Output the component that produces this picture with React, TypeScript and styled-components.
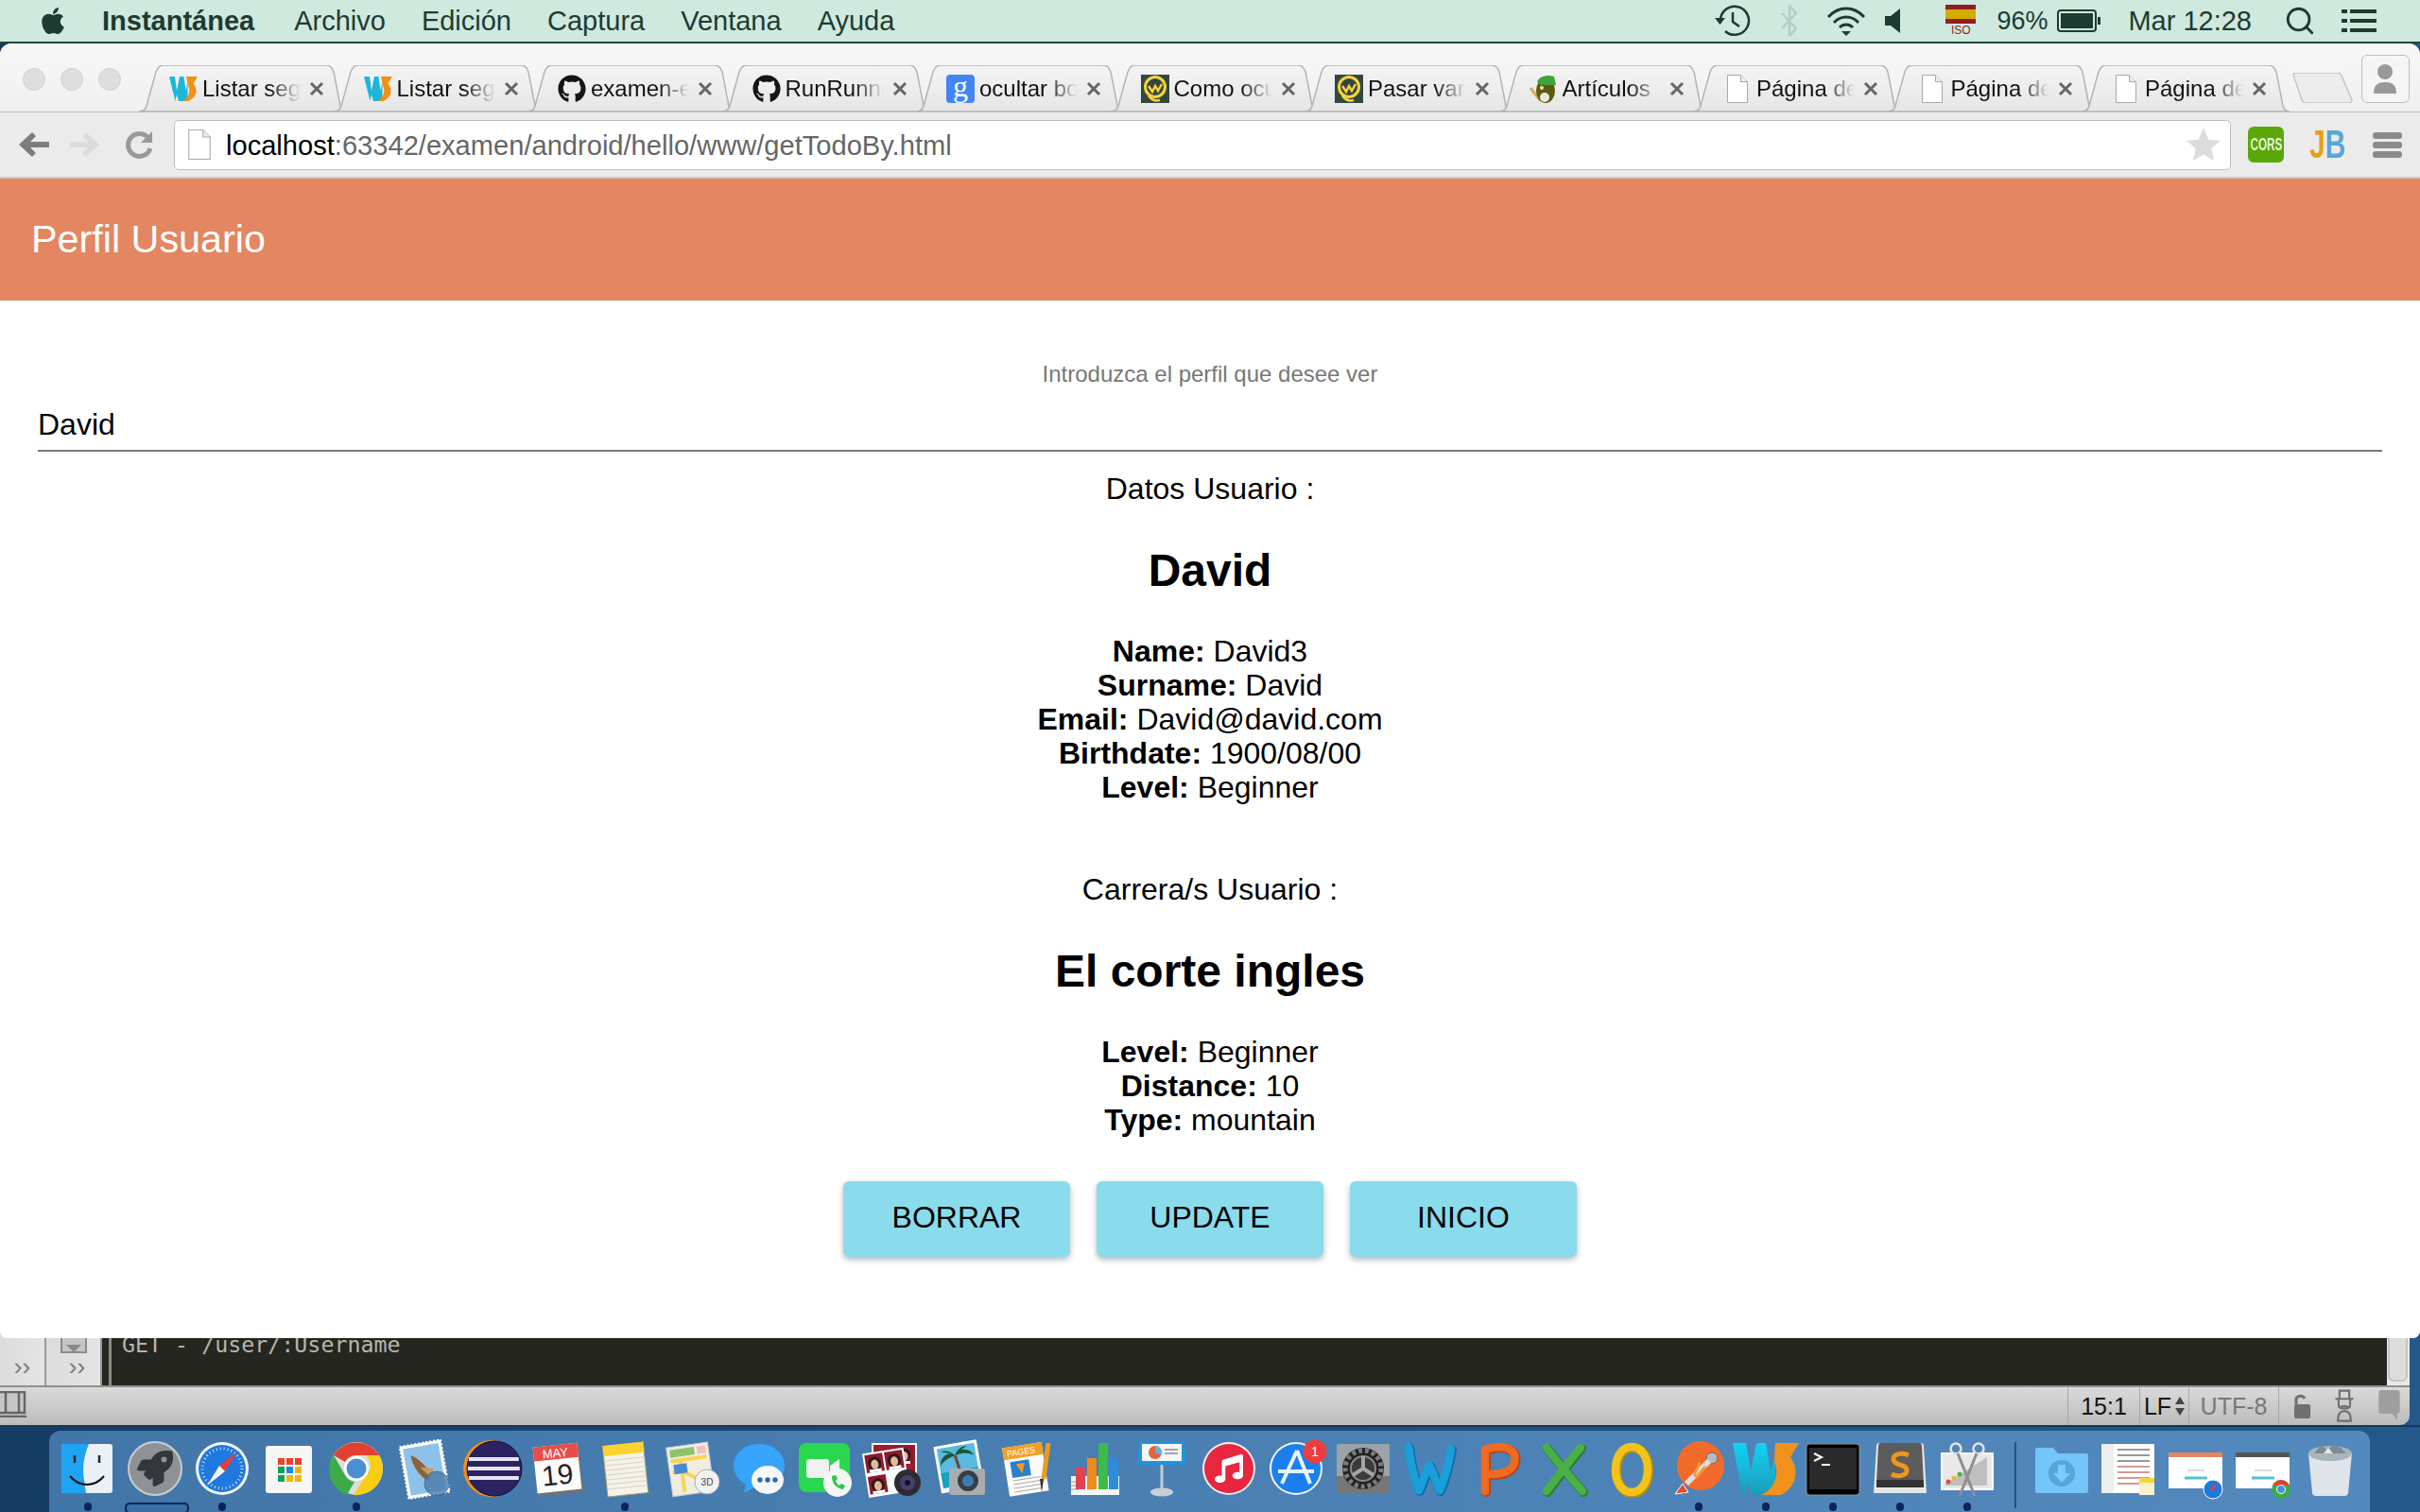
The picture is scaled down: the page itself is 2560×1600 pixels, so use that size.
import React from "react";
import styled, { createGlobalStyle } from "styled-components";
import { FaApple, FaGithub, FaMusic, FaRocket } from "react-icons/fa";
import { Search } from "lucide-react";

const GlobalStyle = createGlobalStyle`
  html, body { margin: 0; padding: 0; background: #1b4672; }
  * { box-sizing: border-box; }
  body { font-family: "Liberation Sans", Arial, sans-serif; }
`;

const Screen = styled.div`
  width: 2560px;
  height: 1600px;
  display: flex;
  flex-direction: column;
  overflow: hidden;
  background: linear-gradient(100deg, #14395f 0%, #1c4a78 50%, #24598c 100%);
`;

/* ---------- mac menu bar ---------- */
const MenuBar = styled.div`
  height: 46px;
  flex: none;
  display: flex;
  align-items: center;
  background: #cfe9df;
  border-bottom: 2px solid #1d4a3a;
  color: #1e3b30;
  font-size: 29px;
  padding-left: 41px;
`;

const AppleMark = styled(FaApple)`
  width: 30px;
  height: 32px;
  margin-right: 37px;
  color: #1e3b30;
`;

const MenuItem = styled.span<{ $bold?: boolean }>`
  font-weight: ${(p) => (p.$bold ? 700 : 400)};
  margin-right: ${(p) => (p.$bold ? 42 : 38)}px;
  white-space: nowrap;
`;

const StatusArea = styled.div`
  margin-left: auto;
  display: flex;
  align-items: center;
  height: 44px;
  padding-right: 46px;
`;

const StatusIcon = styled.svg<{ $gap?: number }>`
  display: block;
  flex: none;
  margin-left: ${(p) => p.$gap ?? 0}px;
`;

const SearchIcon = styled(Search)`
  flex: none;
  margin-left: 34px;
`;

const FlagBox = styled.div`
  width: 32px;
  margin-left: 48px;
  display: flex;
  flex-direction: column;
  align-items: center;
`;

const Flag = styled.div`
  width: 32px;
  height: 20px;
  background: linear-gradient(#8f1d21 0 25%, #d2ac00 25% 75%, #8f1d21 75%);
`;

const FlagLabel = styled.span`
  font-size: 12px;
  line-height: 14px;
  color: #8f1d21;
`;

const StatusText = styled.span<{ $gap: number; $size: number }>`
  margin-left: ${(p) => p.$gap}px;
  font-size: ${(p) => p.$size}px;
  white-space: nowrap;
`;

/* ---------- browser ---------- */
const BrowserWindow = styled.div`
  height: 1370px;
  flex: none;
  position: relative;
  z-index: 1;
  display: flex;
  flex-direction: column;
  border-radius: 12px 12px 8px 8px;
  overflow: hidden;
  background: #fff;
`;

const TabStrip = styled.div`
  height: 72px;
  flex: none;
  display: flex;
  align-items: flex-end;
  padding-left: 24px;
  background: linear-gradient(#f8f8f8, #f0f0f0);
`;

const Lights = styled.div`
  display: flex;
  gap: 16px;
  align-self: flex-start;
  margin-top: 26px;
  margin-right: 19px;
`;

const Light = styled.div`
  width: 24px;
  height: 24px;
  border-radius: 50%;
  background: #dedede;
  border: 1px solid #d2d2d2;
`;

const Tab = styled.div`
  position: relative;
  width: 220px;
  height: 49px;
  margin-right: -14.5px;
  padding: 0 0 0 32px;
  display: flex;
  align-items: center;
  font-size: 24px;
  color: #111;
`;

const TabShape = styled.svg`
  position: absolute;
  inset: 0;
  width: 100%;
  height: 100%;
`;

const Favicon = styled.div`
  position: relative;
  width: 30px;
  height: 30px;
  flex: none;
  display: flex;
  align-items: center;
  justify-content: center;
`;

const TabTitle = styled.span`
  position: relative;
  width: 104px;
  margin-left: 5px;
  white-space: nowrap;
  -webkit-mask-image: linear-gradient(90deg, #000 68%, transparent 100%);
  mask-image: linear-gradient(90deg, #000 68%, transparent 100%);
`;

const TabClose = styled.svg`
  position: relative;
  width: 16px;
  height: 16px;
  margin-left: 9px;
  flex: none;
`;

const NewTab = styled.svg`
  width: 64px;
  height: 32px;
  margin-left: 17px;
  margin-bottom: 9px;
  flex: none;
`;

const ProfileButton = styled.div`
  width: 51px;
  height: 51px;
  margin-left: 9px;
  align-self: flex-start;
  margin-top: 12px;
  border: 1px solid #bdbdbd;
  border-radius: 6px;
  background: #f5f5f5;
  display: flex;
  align-items: center;
  justify-content: center;
`;

const Toolbar = styled.div`
  height: 71px;
  flex: none;
  display: flex;
  align-items: center;
  padding-left: 19px;
  background: #ebebeb;
  border-top: 1px solid #bbb;
  border-bottom: 2px solid #c9c9c9;
`;

const NavIcon = styled.svg<{ $gap?: number }>`
  flex: none;
  margin-left: ${(p) => p.$gap ?? 0}px;
`;

const AddressBar = styled.div`
  width: 2176px;
  height: 53px;
  margin-left: 23px;
  flex: none;
  display: flex;
  align-items: center;
  padding: 0 10px 0 14px;
  background: #fff;
  border: 1px solid #bdbdbd;
  border-radius: 5px;
`;

const Url = styled.div`
  margin-left: 16px;
  padding-top: 2px;
  font-size: 29.1px;
  color: #666;
  white-space: nowrap;
  b {
    font-weight: 400;
    color: #000;
  }
`;

const Star = styled.svg`
  margin-left: auto;
  flex: none;
`;

const CorsBadge = styled.div`
  width: 38px;
  height: 38px;
  margin-left: 18px;
  flex: none;
  border-radius: 6px;
  background: #5ba80a;
  color: #e8f5d8;
  font-size: 19px;
  font-weight: 700;
  display: flex;
  align-items: center;
  justify-content: center;
  span {
    display: block;
    transform: scaleX(0.62);
  }
`;

const JbMark = styled.div`
  width: 37px;
  margin-left: 27px;
  font-size: 42px;
  font-weight: 700;
  line-height: 40px;
  flex: none;
  white-space: nowrap;
  transform: scaleX(0.72);
  transform-origin: left center;
  span:first-child { color: #e8a013; }
  span:last-child { color: #5aa7d3; }
`;

const BurgerMenu = styled.div`
  width: 31px;
  margin-left: 30px;
  flex: none;
  display: flex;
  flex-direction: column;
  gap: 3px;
  span {
    height: 7px;
    border-radius: 3px;
    background: #8a8a8a;
  }
`;

/* ---------- page ---------- */
const AppHeader = styled.header`
  height: 129px;
  flex: none;
  display: flex;
  align-items: center;
  padding-left: 33px;
  background: #e28762;
  color: #fff;
  font-size: 41.3px;
`;

const Page = styled.main`
  flex: 1;
  display: flex;
  flex-direction: column;
  align-items: center;
  padding: 60px 40px 0;
  background: #fff;
  color: #000;
  font-size: 32px;
  line-height: 36px;
  text-align: center;
`;

const Hint = styled.div`
  font-size: 24px;
  color: #777;
`;

const NameInput = styled.input`
  width: 100%;
  height: 56px;
  margin-top: 8px;
  padding: 0;
  border: none;
  border-bottom: 2px solid #777;
  outline: none;
  font: inherit;
  color: #000;
  background: transparent;
`;

const SectionLabel = styled.div<{ $top: number }>`
  margin-top: ${(p) => p.$top}px;
`;

const BigName = styled.h2`
  margin: 41px 0 0;
  font-size: 48px;
  line-height: 56px;
  font-weight: 700;
`;

const Fields = styled.div<{ $top: number }>`
  margin-top: ${(p) => p.$top}px;
`;

const Buttons = styled.div`
  display: flex;
  gap: 28px;
  margin-top: 47px;
`;

const ActionButton = styled.button`
  width: 240px;
  height: 80px;
  padding: 0 0 3px;
  border: none;
  border-radius: 6px;
  background: #8adcec;
  color: #000;
  font-family: inherit;
  font-size: 32px;
  box-shadow: 0 3px 6px rgba(0, 0, 0, 0.28);
`;

/* ---------- IDE behind the browser ---------- */
const IdeWindow = styled.div`
  width: 2549px;
  height: 102px;
  flex: none;
  margin-top: -10px;
  display: flex;
  flex-direction: column;
  border-radius: 0 0 10px 0;
  overflow: hidden;
`;

const IdeBody = styled.div`
  height: 60px;
  flex: none;
  display: flex;
  background: #25261f;
`;

const Gutter = styled.div<{ $w: number; $shift?: number }>`
  position: relative;
  width: ${(p) => p.$w}px;
  flex: none;
  display: flex;
  align-items: flex-end;
  justify-content: center;
  padding-bottom: 8px;
  padding-left: ${(p) => p.$shift ?? 0}px;
  background: linear-gradient(90deg, #dcdcdc, #e4e4e4);
  border-right: 2px solid #999;
  color: #777;
  font-size: 26px;
  line-height: 24px;
`;

const ToolWindowIcon = styled.svg`
  position: absolute;
  top: 6px;
  left: 15px;
`;

const CodeLine = styled.div`
  flex: 1;
  margin-left: 7px;
  padding-left: 11px;
  border-left: 3px solid #8a8a86;
  font-family: "DejaVu Sans Mono", "Liberation Mono", monospace;
  font-size: 23.3px;
  line-height: 34px;
  color: #b5b5b0;
  white-space: pre;
`;

const ScrollTrack = styled.div`
  width: 24px;
  flex: none;
  padding: 0 2px 4px 1px;
  background: #e8e8e8;
  display: flex;
  div {
    flex: 1;
    border: 2px solid #c4c4c4;
    border-radius: 0 0 6px 6px;
    background: #dcdcdc;
  }
`;

const StatusBar = styled.div`
  flex: 1;
  display: flex;
  align-items: stretch;
  background: linear-gradient(#dadada, #bcbcbc);
  border-top: 2px solid #8f8f8f;
  font-size: 25px;
  color: #111;
`;

const LayoutIcon = styled.svg`
  margin-top: 4px;
  flex: none;
`;

const StatusCell = styled.div<{ $w: number; $muted?: boolean }>`
  width: ${(p) => p.$w}px;
  flex: none;
  display: flex;
  align-items: center;
  justify-content: center;
  gap: 4px;
  border-left: 1px solid #a6a6a6;
  color: ${(p) => (p.$muted ? "#777" : "#111")};
`;

const StatusCellFirst = styled(StatusCell)`
  margin-left: auto;
`;

const IconsCell = styled.div`
  width: 139px;
  flex: none;
  display: flex;
  align-items: center;
  gap: 22px;
  padding-left: 14px;
  border-left: 1px solid #a6a6a6;
`;

/* ---------- dock ---------- */
const DockArea = styled.div`
  flex: 1;
  padding: 4px 53px 0 52px;
  border-top: 2px solid #15375a;
`;

const Dock = styled.div`
  height: 100%;
  display: flex;
  gap: 13px;
  padding: 12px 0 0 12px;
  border-radius: 12px 12px 0 0;
  background: linear-gradient(90deg, #4276a9, #5389bd);
`;

const DockItem = styled.div<{ $run?: boolean; $bar?: boolean }>`
  position: relative;
  width: 58px;
  height: 58px;
  flex: none;
  svg { display: block; overflow: visible; }
  &::after {
    content: "";
    display: ${(p) => (p.$run || p.$bar ? "block" : "none")};
    position: absolute;
    top: 64px;
    left: ${(p) => (p.$bar ? "-3px" : "25px")};
    width: ${(p) => (p.$bar ? "64px" : "8px")};
    height: ${(p) => (p.$bar ? "8px" : "9px")};
    border-radius: 5px;
    background: ${(p) => (p.$bar ? "#3c6fa5" : "#0a2558")};
    border: ${(p) => (p.$bar ? "2px solid #0a2558" : "none")};
  }
`;

const DockDivider = styled.div`
  width: 2px;
  height: 70px;
  margin: 0 6px 0 8px;
  flex: none;
  background: #25507d;
`;

/* ---------- favicons ---------- */
const WsMark = () => (
  <svg width="30" height="30" viewBox="0 0 60 60">
    <path d="M0 4h12l4 30 6-30h9l4 30 4-20v42H20l-4-14-3 14z" fill="#1cb6d8" />
    <path d="M36 4h24l-9 15c11 13 7 30-11 37H29c12-7 17-21 11-33z" fill="#f29111" />
  </svg>
);

const Swirl = () => (
  <svg width="30" height="30" viewBox="0 0 30 30">
    <rect width="30" height="30" fill="#33473f" />
    <circle cx="15" cy="13" r="10.500" fill="none" stroke="#f5d23e" strokeWidth="3" />
    <path d="M8 12l4 6 3-6 3 5 4-7M8 22c3 5 8 6 12 5" fill="none" stroke="#f5d23e" strokeWidth="2.500" />
  </svg>
);

const GoogleFav = styled.div`
  width: 30px;
  height: 30px;
  border-radius: 4px;
  background: #4285f4;
  color: #fff;
  font-family: "Liberation Serif", serif;
  font-size: 32px;
  line-height: 24px;
  text-align: center;
`;

const BirdFav = () => (
  <svg width="30" height="30" viewBox="0 0 30 30">
    <path d="M1 14l10 13" stroke="#d8b066" strokeWidth="3.500" />
    <ellipse cx="17" cy="17" rx="10" ry="13" fill="#5f5a12" />
    <path d="M8 8c2-7 12-8 18-6l2 9H12z" fill="#3fa33a" />
    <circle cx="13" cy="14" r="2" fill="#e8e8a0" />
    <circle cx="16" cy="24" r="5" fill="#e8e8e0" />
  </svg>
);

const PageIcon = ({ w = 22, h = 30 }: { w?: number; h?: number }) => (
  <svg width={w} height={h} viewBox="0 0 22 30">
    <path d="M.5.5h14l7 7v22H.5z" fill="#fff" stroke="#a8a8a8" />
    <path d="M14.500.5v7h7" fill="#eee" stroke="#a8a8a8" />
  </svg>
);

type TabInfo = { icon: React.ReactNode; title: string };

const tabs: TabInfo[] = [
  { icon: <WsMark />, title: "Listar seg" },
  { icon: <WsMark />, title: "Listar seg" },
  { icon: <FaGithub size={30} color="#151515" />, title: "examen-e" },
  { icon: <FaGithub size={30} color="#151515" />, title: "RunRunne" },
  { icon: <GoogleFav>g</GoogleFav>, title: "ocultar bo" },
  { icon: <Swirl />, title: "Como ocu" },
  { icon: <Swirl />, title: "Pasar vari" },
  { icon: <BirdFav />, title: "Artículos" },
  { icon: <PageIcon />, title: "Página de" },
  { icon: <PageIcon />, title: "Página de" },
  { icon: <PageIcon />, title: "Página de" },
];

/* ---------- dock icons (58 x 58 box) ---------- */
const Ico = ({ children, defs }: { children: React.ReactNode; defs?: React.ReactNode }) => (
  <svg width="58" height="58" viewBox="0 0 58 58">
    {defs && <defs>{defs}</defs>}
    {children}
  </svg>
);

const Finder = () => (
  <Ico>
    <rect x="1" y="2" width="54" height="52" rx="3" fill="#e9f0f6" />
    <path d="M4 2h26c-6 14-7 28-5 38l2 14H4a3 3 0 0 1-3-3V5a3 3 0 0 1 3-3z" fill="#1ea4f2" />
    <path d="M15 14v8M41 14v8" stroke="#1d2a3a" strokeWidth="2.500" />
    <path d="M10 36c10 12 26 12 36 0" fill="none" stroke="#111" strokeWidth="2" />
  </Ico>
);

const Launchpad = () => (
  <Ico>
    <circle cx="29" cy="28" r="28" fill="#8d9296" stroke="#c9cdd0" strokeWidth="2" />
    <g transform="translate(10 9)"><FaRocket size={38} color="#33373b" /></g>
  </Ico>
);

const Safari = () => (
  <Ico>
    <circle cx="29" cy="28" r="28" fill="#f2f6fb" />
    <circle cx="29" cy="28" r="25" fill="#1e78de" />
    <circle cx="29" cy="28" r="21" fill="none" stroke="#cfe4fb" strokeWidth="3" strokeDasharray="1 3" />
    <path d="M45 10L26 25l6 6z" fill="#ef3b36" />
    <path d="M13 46l13-21 6 6z" fill="#f2f2f2" />
  </Ico>
);

const AppsGrid = () => {
  const colours = ["#e9432f", "#e9432f", "#e9432f", "#11a05a", "#1689e6", "#f7b500", "#11a05a", "#f7b500", "#f7b500"];
  return (
    <Ico>
      <rect x="4" y="4" width="49" height="50" rx="3" fill="#f7f7f7" />
      {colours.map((c, i) => (
        <rect key={i} x={17 + (i % 3) * 9} y={17 + Math.floor(i / 3) * 9} width="7" height="7" fill={c} />
      ))}
    </Ico>
  );
};

const Chrome = () => (
  <Ico>
    <circle cx="29" cy="28" r="28" fill="#ddd" />
    <path d="M5 14a28 28 0 0 1 48 0H29a14 14 0 0 0-12 7z" fill="#e2412f" />
    <path d="M5 14l12 21a14 14 0 0 0 10 7l-8 14A28 28 0 0 1 5 14z" fill="#3cab4a" />
    <path d="M53 14a28 28 0 0 1-27 42l14-22a14 14 0 0 0-1-20z" fill="#fbcf10" />
    <circle cx="29" cy="28" r="13" fill="#fff" />
    <circle cx="29" cy="28" r="10.500" fill="#4b8fd3" />
  </Ico>
);

const MailStamp = () => (
  <Ico>
    <g transform="rotate(-10 29 28)">
      <rect x="8" y="1" width="44" height="56" fill="#fff" stroke="#fff" strokeWidth="2" strokeDasharray="2 2" />
      <rect x="11" y="4" width="38" height="50" fill="#8fc2ea" />
      <path d="M18 12c6 2 14 14 18 22l-4 8c-8-6-14-18-14-30z" fill="#8a6438" />
      <path d="M26 26l14 4-6 8z" fill="#c69a5e" />
    </g>
    <circle cx="43" cy="44" r="13" fill="#4b7baa" opacity=".8" stroke="#36618d" />
  </Ico>
);

const Eclipse = () => (
  <Ico>
    <circle cx="30" cy="28" r="30" fill="#f28d1a" />
    <circle cx="33" cy="28" r="29" fill="#2b2262" stroke="#0f1030" />
    <path d="M6 18h54M5 28h56M6 38h54" stroke="#e6e6f2" strokeWidth="4" transform="scale(.98 1)" />
  </Ico>
);

const CalendarMini = () => (
  <Ico>
    <g transform="rotate(-6 29 28)">
      <rect x="6" y="6" width="48" height="50" fill="#6d7378" />
      <rect x="5" y="3" width="47" height="49" fill="#fbfbfb" />
      <rect x="5" y="3" width="47" height="15" fill="#ea4c4c" />
      <text x="28" y="16" textAnchor="middle" fontSize="13" fill="#fff" fontFamily="Liberation Sans">MAY</text>
      <text x="28" y="45" textAnchor="middle" fontSize="30" fill="#222" fontFamily="Liberation Sans">19</text>
    </g>
  </Ico>
);

const Notes = () => (
  <Ico>
    <g transform="rotate(-6 29 28)">
      <rect x="8" y="2" width="43" height="54" fill="#f5f3e6" stroke="#a89c6e" />
      <rect x="8" y="2" width="43" height="11" fill="#fbd431" />
      {[18, 23, 28, 33, 38, 43, 48].map((y) => (
        <path key={y} d={`M8 ${y}h43`} stroke="#d3d3c8" />
      ))}
    </g>
  </Ico>
);

const Maps = () => (
  <Ico>
    <g transform="rotate(-8 26 28)">
      <rect x="5" y="3" width="44" height="52" fill="#f1ece0" stroke="#cfcfcf" />
      <rect x="8" y="6" width="26" height="8" fill="#8ac56b" />
      <rect x="37" y="6" width="9" height="8" fill="#f2bcc0" />
      <path d="M8 18h38M18 18v34M8 30c14-2 20 8 38 18" stroke="#fad54e" strokeWidth="4" fill="none" />
      <rect x="10" y="22" width="14" height="10" fill="#4a88d0" />
    </g>
    <circle cx="45" cy="42" r="13" fill="#f1f3f3" stroke="#aab" />
    <text x="45" y="46" textAnchor="middle" fontSize="10" fill="#444" fontFamily="Liberation Sans">3D</text>
  </Ico>
);

const Messages = () => (
  <Ico>
    <path d="M29 2c15 0 27 10 27 23S44 48 29 48c-3 0-6 0-9 2-2 2-6 3-8 3 2-2 3-5 3-8C7 40 2 33 2 25 2 12 14 2 29 2z" fill="#36a4fb" />
    <ellipse cx="38" cy="40" rx="17" ry="15" fill="#f7f7f7" />
    {[30, 38, 46].map((x) => (
      <circle key={x} cx={x} cy="40" r="2.700" fill="#2d6aa6" />
    ))}
  </Ico>
);

const FaceTime = () => (
  <Ico>
    <rect x="0" y="1" width="54" height="52" rx="8" fill="#29d84e" />
    <rect x="8" y="18" width="24" height="20" rx="3" fill="#f2f2f2" />
    <path d="M33 25l10-7v20l-10-7z" fill="#f2f2f2" />
    <ellipse cx="41" cy="43" rx="15" ry="15" fill="#f4f6f4" />
    <path d="M35 36c0 8 5 13 12 14l2-4-4-2-2 2c-2-1-3-3-4-5l2-2-2-4z" fill="#2cc84a" />
  </Ico>
);

const Portrait = ({ x, y }: { x: number; y: number }) => (
  <g transform={`translate(${x} ${y})`}>
    <rect width="19" height="19" fill="#8d1a2b" />
    <circle cx="9.500" cy="10" r="7" fill="#2a1a18" />
    <ellipse cx="9.500" cy="11" rx="4" ry="5" fill="#e7b79c" />
    <rect x="3" y="16" width="13" height="3" fill="#fff" />
  </g>
);

const PhotoBooth = () => (
  <Ico>
    <rect x="6" y="1" width="48" height="44" fill="#fff" />
    <rect x="8" y="3" width="44" height="40" fill="#9f1b2f" />
    <Portrait x={31} y={4} />
    <g transform="rotate(-9 20 30)">
      <rect x="-1" y="9" width="44" height="47" fill="#fff" />
      <Portrait x={1} y={11} />
      <Portrait x={22} y={11} />
      <Portrait x={1} y={34} />
    </g>
    <circle cx="44" cy="43" r="14" fill="#2c2c30" />
    <circle cx="44" cy="43" r="8" fill="#4a3d70" />
    <circle cx="44" cy="43" r="3" fill="#15151a" />
  </Ico>
);

const IPhoto = () => (
  <Ico>
    <g transform="rotate(-10 26 24)">
      <rect x="4" y="1" width="46" height="50" fill="#fff" />
      <rect x="7" y="4" width="40" height="42" fill="#5bb9e4" />
      <rect x="7" y="30" width="40" height="16" fill="#18a0c0" />
      <path d="M28 34l-3-20" stroke="#6b4a2a" strokeWidth="3" />
      <path d="M25 14C18 8 10 12 8 22c6-6 12-7 17-8zM25 14c6-8 16-6 20 3-6-4-14-5-20-3zM25 14c-4-6-10-8-14-6 5 1 10 3 14 6zM25 14c2-5 8-9 14-8-5 2-10 5-14 8z" fill="#155a30" />
    </g>
    <rect x="17" y="28" width="38" height="28" rx="3" fill="#a9adb0" />
    <circle cx="37" cy="41" r="11" fill="#3a3f46" />
    <circle cx="37" cy="41" r="6" fill="#3e7bb6" />
  </Ico>
);

const PagesIcon = () => (
  <Ico>
    <g transform="rotate(-9 26 30)">
      <rect x="6" y="3" width="42" height="52" fill="#fafafa" />
      <rect x="6" y="3" width="42" height="13" fill="#f2a024" />
      <text x="10" y="13" fontSize="9" fill="#fff" fontFamily="Liberation Sans">PAGES</text>
      <rect x="12" y="19" width="20" height="17" fill="#2b7fce" />
      <path d="M18 22h9l-4 11z" fill="#f29a27" />
      {[39, 43, 47, 51].map((y) => (
        <path key={y} d={`M12 ${y}h30`} stroke="#aaa" />
      ))}
    </g>
    <path d="M51 1l-5 38" stroke="#ef9a1f" strokeWidth="5" />
    <path d="M46 39l-2 14-2-14z" fill="#333" />
  </Ico>
);

const NumbersIcon = () => (
  <Ico>
    <path d="M4 36h51v20H4z" fill="#f5f5f5" />
    <path d="M4 42h8M4 46h8M4 50h8" stroke="#999" />
    <rect x="9" y="27" width="10" height="23" fill="#e0434f" />
    <rect x="21" y="17" width="10" height="33" fill="#f08a1d" />
    <rect x="33" y="1" width="10" height="49" fill="#3dbb4a" />
    <rect x="44" y="16" width="10" height="34" fill="#2a8de0" />
  </Ico>
);

const KeynoteIcon = () => (
  <Ico>
    <path d="M5 0h48l2 24H3z" fill="#2293dd" />
    <rect x="8" y="2" width="42" height="18" fill="#f4f6fa" />
    <circle cx="22" cy="11" r="7" fill="#e8633a" />
    <path d="M22 11V4a7 7 0 0 1 6 10z" fill="#5bb2e8" />
    <path d="M32 8h14M32 12h14" stroke="#888" strokeWidth="1.500" />
    <rect x="27.500" y="24" width="3" height="28" fill="#c4cdd4" />
    <ellipse cx="29" cy="53" rx="12" ry="4.500" fill="#c7ced4" />
  </Ico>
);

const ITunes = () => (
  <Ico>
    <circle cx="29" cy="28" r="28" fill="#f0f0f0" />
    <circle cx="29" cy="28" r="26" fill="#e8263f" />
    <g transform="translate(14 13)"><FaMusic size={30} color="#fff" /></g>
  </Ico>
);

const BadgeDisc = styled.text`
  font-family: "Liberation Sans", sans-serif;
`;

const AppStore = () => (
  <Ico>
    <circle cx="29" cy="28" r="28" fill="#eef4fb" />
    <circle cx="29" cy="28" r="26" fill="#1b80ee" />
    <path d="M30 9L14 44M30 9l14 35M10 31h38" stroke="#eaf3fc" strokeWidth="4" fill="none" />
    <circle cx="49" cy="10" r="12.500" fill="#ef3c3c" />
    <BadgeDisc x="49" y="15" textAnchor="middle" fontSize="14" fill="#fff">1</BadgeDisc>
  </Ico>
);

const SysPrefs = () => (
  <Ico>
    <rect x="1" y="2" width="56" height="53" rx="2" fill="#9aa3a8" />
    <rect x="1" y="36" width="56" height="19" fill="#777" />
    <circle cx="29" cy="28" r="22" fill="#222" />
    <circle cx="29" cy="28" r="19" fill="none" stroke="#7c7c7c" strokeWidth="5" strokeDasharray="4 3" />
    <circle cx="29" cy="28" r="13" fill="#3a3a3a" stroke="#8a8a8a" strokeWidth="2" />
    <path d="M29 28V15M29 28l11 7M29 28l-11 7" stroke="#a6a6a6" strokeWidth="4" />
  </Ico>
);

const Ribbon = ({ d, colour, dark }: { d: string; colour: string; dark: string }) => (
  <Ico>
    <path d={d} fill="none" stroke={dark} strokeWidth="10" strokeLinecap="round" strokeLinejoin="round" transform="translate(1 1)" />
    <path d={d} fill="none" stroke={colour} strokeWidth="8.500" strokeLinecap="round" strokeLinejoin="round" />
  </Ico>
);

const Postman = () => (
  <Ico>
    <ellipse cx="31" cy="25" rx="25" ry="26" fill="#f26b2a" />
    <circle cx="43" cy="17" r="6" fill="#b9b9b9" stroke="#666" />
    <path d="M40 20L16 44" stroke="#ddd" strokeWidth="6" />
    <path d="M30 22l-6 14M36 26l-10 12" stroke="#f39a3a" strokeWidth="3" />
    <path d="M12 44l-8 11 14-2z" fill="#ea4a26" stroke="#fff" />
  </Ico>
);

const WsDock = () => (
  <Ico
    defs={
      <linearGradient id="wsBlue" x1="0" y1="0" x2="0" y2="1">
        <stop offset="0" stopColor="#12d3f5" />
        <stop offset="1" stopColor="#1c9cb8" />
      </linearGradient>
    }
  >
    <path d="M-6 1H8l5 30 6-30h10l5 30 5-14v39H14l-4-14-3 14H4z" fill="url(#wsBlue)" />
    <path d="M39 1h25l-9 15c10 14 6 32-10 40H24c14-6 20-22 14-36z" fill="#f2921d" />
  </Ico>
);

const Terminal = () => (
  <Ico>
    <rect x="1" y="2" width="56" height="54" rx="3" fill="#000" stroke="#8a95a0" />
    <rect x="4" y="6" width="50" height="44" fill="#2a2a2a" />
    <path d="M9 12l8 4-8 4M17 24h9" fill="none" stroke="#fff" strokeWidth="2" />
  </Ico>
);

const Sublime = () => (
  <Ico>
    <path d="M1 54l3-50a3 3 0 0 1 3-3h44a3 3 0 0 1 3 3l3 50z" fill="#e6e6e6" />
    <path d="M4 44L6 4a3 3 0 0 1 3-3h40a3 3 0 0 1 3 3l2 40z" fill="#5c5c5c" />
    <rect x="4" y="40" width="50" height="8" fill="#333" />
    <path d="M38 14c-6-3-16-2-16 4 0 7 14 5 14 12 0 6-10 7-16 4" fill="none" stroke="#f0961c" strokeWidth="5" />
  </Ico>
);

const GrabIcon = () => (
  <Ico>
    <rect x="2" y="12" width="54" height="38" fill="#e9e9e9" stroke="#fff" strokeWidth="2" />
    <path d="M6 44l44-28v30H6z" fill="#bfbfbf" />
    <circle cx="17" cy="7" r="5.500" fill="none" stroke="#e4e4e4" strokeWidth="2.500" />
    <circle cx="41" cy="7" r="5.500" fill="none" stroke="#e4e4e4" strokeWidth="2.500" />
    <path d="M19 12l18 45M39 12L21 57" stroke="#8f8f8f" strokeWidth="3" />
    <circle cx="9" cy="42" r="2.500" fill="#e04c3c" />
    <circle cx="15" cy="38" r="2.500" fill="#e8b82c" />
    <circle cx="21" cy="34" r="2.500" fill="#48b04a" />
  </Ico>
);

const Folder = () => (
  <Ico>
    <path d="M1 8a2 2 0 0 1 2-2h17l5 6h30a2 2 0 0 1 2 2v38a2 2 0 0 1-2 2H3a2 2 0 0 1-2-2z" fill="#73c6f7" />
    <circle cx="29" cy="33" r="14" fill="#54a6dc" />
    <path d="M25 24h8v9h5l-9 10-9-10h5z" fill="#7ccbf8" />
  </Ico>
);

const DocStack = () => (
  <Ico>
    <rect x="0" y="2" width="56" height="52" fill="#fff" />
    <rect x="0" y="2" width="13" height="52" fill="#eee" />
    {[8, 14, 20, 26, 32, 38, 44].map((y) => (
      <path key={y} d={`M17 ${y}h34`} stroke={y > 24 ? "#d49a90" : "#999"} strokeWidth="2" />
    ))}
    <rect x="40" y="40" width="16" height="16" fill="#f7f1cc" />
    <rect x="40" y="38" width="16" height="5" fill="#f5d33f" />
  </Ico>
);

const WindowThumb = ({ head, overlay }: { head: string; overlay: React.ReactNode }) => (
  <Ico>
    <rect x="0" y="11" width="57" height="38" fill="#fff" />
    <rect x="0" y="11" width="57" height="5" fill={head} />
    <path d="M20 30h18" stroke="#bbb" />
    <path d="M17 38h24" stroke="#52c2d8" strokeWidth="3" />
    {overlay}
  </Ico>
);

const Trash = () => (
  <Ico>
    <path d="M6 12h46l-4 42a4 4 0 0 1-4 3H14a4 4 0 0 1-4-3z" fill="#dfe5ea" />
    <ellipse cx="29" cy="12" rx="23" ry="8" fill="#aab4bc" />
    <path d="M12 12l8-10 6 8 6-8 8 4 6 6z" fill="#7a8a96" />
    <path d="M22 12l5-6 5 6z" fill="#e6e6e6" />
  </Ico>
);

const miniSafari = (
  <g>
    <circle cx="47" cy="50" r="10" fill="#1e78de" stroke="#fff" />
    <path d="M52 43l-8 6 3 3z" fill="#ef3b36" />
  </g>
);

const miniChrome = (
  <g>
    <circle cx="48" cy="50" r="10" fill="#3cab4a" />
    <path d="M39 46a10 10 0 0 1 18 0z" fill="#e2412f" />
    <circle cx="48" cy="50" r="4.500" fill="#4b8fd3" stroke="#fff" />
  </g>
);

const Tabs = () => (
  <>
    {tabs.map((t, i) => (
      <Tab key={i}>
        <TabShape viewBox="0 0 220 49" preserveAspectRatio="none">
          <defs>
            <linearGradient id={`tabFill${i}`} x1="0" y1="0" x2="0" y2="1">
              <stop offset="0" stopColor="#f4f4f4" />
              <stop offset="1" stopColor="#e6e6e6" />
            </linearGradient>
          </defs>
          <path
            d="M0 49c5 0 7-2 8-6L18 7c2-5 4-7 9-7h170c5 0 7 2 9 7l7 36c1 4 3 6 7 6z"
            fill={`url(#tabFill${i})`}
            stroke="#b4b4b4"
            strokeWidth="1.500"
          />
        </TabShape>
        <Favicon>{t.icon}</Favicon>
        <TabTitle>{t.title}</TabTitle>
        <TabClose viewBox="0 0 16 16">
          <path d="M2 2l12 12M14 2L2 14" stroke="#666" strokeWidth="3" />
        </TabClose>
      </Tab>
    ))}
  </>
);

export default function App() {
  return (
    <Screen>
      <GlobalStyle />
      <MenuBar>
        <AppleMark />
        <MenuItem $bold>Instantánea</MenuItem>
        <MenuItem>Archivo</MenuItem>
        <MenuItem>Edición</MenuItem>
        <MenuItem>Captura</MenuItem>
        <MenuItem>Ventana</MenuItem>
        <MenuItem>Ayuda</MenuItem>
        <StatusArea>
          <StatusIcon width="38" height="36" viewBox="0 0 38 36" fill="none" stroke="#1e3b30" strokeWidth="2.500">
            <path d="M6 18a15 15 0 1 1 5 11" />
            <path d="M19 9v10l7 5" />
            <path d="M0 15h11l-5.500 7z" fill="#1e3b30" stroke="none" />
          </StatusIcon>
          <StatusIcon $gap={32} width="18" height="34" viewBox="0 0 18 34" fill="none" stroke="#b3cfc5" strokeWidth="2.500">
            <path d="M1 9l15 16-7 8V1l7 8L1 25" />
          </StatusIcon>
          <StatusIcon $gap={30} width="42" height="32" viewBox="0 0 42 32" fill="none" stroke="#1e3b30" strokeWidth="3">
            <path d="M2 12c11-12 27-12 38 0M8 18c7-8 19-8 26 0M14 23c4-4 10-4 14 0" />
            <path d="M16 27h10l-5 5z" fill="#1e3b30" stroke="none" />
          </StatusIcon>
          <StatusIcon $gap={20} width="16" height="26" viewBox="0 0 16 26">
            <path d="M0 8h6l10-8v26L6 18H0z" fill="#1e3b30" />
          </StatusIcon>
          <FlagBox>
            <Flag />
            <FlagLabel>ISO</FlagLabel>
          </FlagBox>
          <StatusText $gap={22} $size={27}>96%</StatusText>
          <StatusIcon $gap={10} width="47" height="24" viewBox="0 0 47 24">
            <rect x="1" y="1" width="40" height="22" rx="3" fill="none" stroke="#1e3b30" strokeWidth="2" />
            <rect x="4" y="4" width="34" height="16" fill="#1e3b30" />
            <rect x="43" y="8" width="3" height="8" fill="#1e3b30" />
          </StatusIcon>
          <StatusText $gap={28} $size={29}>Mar 12:28</StatusText>
          <SearchIcon size={34} color="#1e3b30" strokeWidth={2} />
          <StatusIcon $gap={27} width="37" height="24" viewBox="0 0 37 24" fill="#1e3b30">
            <path d="M0 0h6v4H0zM9 0h28v4H9zM0 10h6v4H0zM9 10h28v4H9zM0 20h6v4H0zM9 20h28v4H9z" />
          </StatusIcon>
        </StatusArea>
      </MenuBar>

      <BrowserWindow>
        <TabStrip>
          <Lights>
            <Light />
            <Light />
            <Light />
          </Lights>
          <Tabs />
          <NewTab viewBox="0 0 64 32">
            <path d="M1 2c0-1 1-2 3-2h44c2 0 3 1 4 3l11 26c0 2-1 3-3 3H15c-3 0-4-1-5-3z" fill="#ececec" stroke="#c4c4c4" strokeWidth="1.500" />
          </NewTab>
          <ProfileButton>
            <svg width="26" height="36" viewBox="0 0 26 36" fill="#999">
              <circle cx="13" cy="10" r="8" />
              <path d="M1 33c0-9 4-12 12-12s12 3 12 12z" />
            </svg>
          </ProfileButton>
        </TabStrip>
        <Toolbar>
          <NavIcon width="34" height="30" viewBox="0 0 34 30">
            <path d="M15 2L1 15l14 13 4-4-6-6h20v-6H13l6-6z" fill="#7d7d7d" />
          </NavIcon>
          <NavIcon $gap={21} width="32" height="30" viewBox="0 0 32 30">
            <path d="M17 2l14 13-14 13-4-4 6-6H0v-6h19l-6-6z" fill="#dcdcdc" />
          </NavIcon>
          <NavIcon $gap={27} width="28" height="32" viewBox="0 0 28 32">
            <path d="M24 9a12 12 0 1 0 2 11" fill="none" stroke="#999" strokeWidth="5" />
            <path d="M28 2v12H16z" fill="#999" />
          </NavIcon>
          <AddressBar>
            <PageIcon w={24} h={32} />
            <Url>
              <b>localhost</b>:63342/examen/android/hello/www/getTodoBy.html
            </Url>
            <Star width="36" height="36" viewBox="0 0 24 24">
              <path d="M12 0l3.500 8.500 8.500.7-6.500 5.600 2 8.700L12 18.800 4.500 23.500l2-8.700L0 9.200l8.500-.7z" fill="#dcdcdc" />
            </Star>
          </AddressBar>
          <CorsBadge>
            <span>CORS</span>
          </CorsBadge>
          <JbMark>
            <span>J</span>
            <span>B</span>
          </JbMark>
          <BurgerMenu>
            <span />
            <span />
            <span />
          </BurgerMenu>
        </Toolbar>

        <AppHeader>Perfil Usuario</AppHeader>
        <Page>
          <Hint>Introduzca el perfil que desee ver</Hint>
          <NameInput readOnly value="David" />
          <SectionLabel $top={21}>Datos Usuario :</SectionLabel>
          <BigName>David</BigName>
          <Fields $top={39}>
            <div><b>Name:</b> David3</div>
            <div><b>Surname:</b> David</div>
            <div><b>Email:</b> David@david.com</div>
            <div><b>Birthdate:</b> 1900/08/00</div>
            <div><b>Level:</b> Beginner</div>
          </Fields>
          <SectionLabel $top={72}>Carrera/s Usuario :</SectionLabel>
          <BigName>El corte ingles</BigName>
          <Fields $top={39}>
            <div><b>Level:</b> Beginner</div>
            <div><b>Distance:</b> 10</div>
            <div><b>Type:</b> mountain</div>
          </Fields>
          <Buttons>
            <ActionButton>BORRAR</ActionButton>
            <ActionButton>UPDATE</ActionButton>
            <ActionButton>INICIO</ActionButton>
          </Buttons>
        </Page>
      </BrowserWindow>

      <IdeWindow>
        <IdeBody>
          <Gutter $w={49}>››</Gutter>
          <Gutter $w={59} $shift={8}>
            <ToolWindowIcon width="28" height="20" viewBox="0 0 28 20">
              <rect x="1" y="1" width="26" height="18" fill="#c6c6c6" stroke="#8a8a8a" strokeWidth="2" />
              <path d="M14 19l8-8H6z" fill="#8a8a8a" />
            </ToolWindowIcon>
            ››
          </Gutter>
          <CodeLine>GET - /user/:Username</CodeLine>
          <ScrollTrack>
            <div />
          </ScrollTrack>
        </IdeBody>
        <StatusBar>
          <LayoutIcon width="28" height="28" viewBox="0 0 28 28" fill="none" stroke="#666" strokeWidth="2.500">
            <rect x="-2" y="1" width="28" height="22" fill="#c6c6c6" />
            <path d="M6 1v22M20 1v22M-2 27h30" />
          </LayoutIcon>
          <StatusCellFirst $w={76}>15:1</StatusCellFirst>
          <StatusCell $w={52}>
            LF
            <svg width="10" height="24" viewBox="0 0 10 24" fill="#444">
              <path d="M5 2l5 8H0zM5 22l5-8H0z" />
            </svg>
          </StatusCell>
          <StatusCell $w={95} $muted>UTF-8</StatusCell>
          <IconsCell>
            <svg width="20" height="28" viewBox="0 0 20 28" fill="none">
              <path d="M4 12V6a5 5 0 0 1 9 0" stroke="#6f6f6f" strokeWidth="3" />
              <rect x="2" y="12" width="17" height="15" rx="2" fill="#6f6f6f" />
            </svg>
            <svg width="26" height="38" viewBox="0 0 26 44" fill="none" stroke="#6f6f6f" strokeWidth="2.500">
              <path d="M7 12V3h12v9M2 13h22M6 13v8c0 5 14 5 14 0v-8M5 40c0-9 4-12 8-12s8 3 8 12z" />
              <path d="M7 24c3-3 9-3 12 0" />
            </svg>
            <svg width="25" height="34" viewBox="0 0 25 38">
              <path d="M3 0h19a3 3 0 0 1 3 3v22a3 3 0 0 1-3 3v8l-6-8H3a3 3 0 0 1-3-3V3a3 3 0 0 1 3-3z" fill="#9e9e9e" />
            </svg>
          </IconsCell>
        </StatusBar>
      </IdeWindow>

      <DockArea>
        <Dock>
          <DockItem $run><Finder /></DockItem>
          <DockItem $bar><Launchpad /></DockItem>
          <DockItem $run><Safari /></DockItem>
          <DockItem><AppsGrid /></DockItem>
          <DockItem $run><Chrome /></DockItem>
          <DockItem><MailStamp /></DockItem>
          <DockItem><Eclipse /></DockItem>
          <DockItem><CalendarMini /></DockItem>
          <DockItem $run><Notes /></DockItem>
          <DockItem><Maps /></DockItem>
          <DockItem><Messages /></DockItem>
          <DockItem><FaceTime /></DockItem>
          <DockItem><PhotoBooth /></DockItem>
          <DockItem><IPhoto /></DockItem>
          <DockItem><PagesIcon /></DockItem>
          <DockItem><NumbersIcon /></DockItem>
          <DockItem><KeynoteIcon /></DockItem>
          <DockItem><ITunes /></DockItem>
          <DockItem><AppStore /></DockItem>
          <DockItem><SysPrefs /></DockItem>
          <DockItem><Ribbon d="M6 5c2 16 6 34 11 46L28 24l11 27c5-12 10-30 12-44" colour="#1a9fdb" dark="#0c6fa8" /></DockItem>
          <DockItem><Ribbon d="M16 52V8c24-8 36 2 30 16-4 8-14 10-24 10" colour="#ef6a22" dark="#b8430f" /></DockItem>
          <DockItem><Ribbon d="M10 6c12 16 26 32 38 46M46 6C34 20 22 36 10 52" colour="#4aaf47" dark="#2b7d2c" /></DockItem>
          <DockItem><Ribbon d="M29 5c10 0 17 10 17 24S39 53 29 53 12 43 12 29 19 5 29 5z" colour="#f2c318" dark="#b98d0c" /></DockItem>
          <DockItem $run><Postman /></DockItem>
          <DockItem $run><WsDock /></DockItem>
          <DockItem $run><Terminal /></DockItem>
          <DockItem $run><Sublime /></DockItem>
          <DockItem $run><GrabIcon /></DockItem>
          <DockDivider />
          <DockItem><Folder /></DockItem>
          <DockItem><DocStack /></DockItem>
          <DockItem><WindowThumb head="#e28762" overlay={miniSafari} /></DockItem>
          <DockItem><WindowThumb head="#555" overlay={miniChrome} /></DockItem>
          <DockItem><Trash /></DockItem>
        </Dock>
      </DockArea>
    </Screen>
  );
}
